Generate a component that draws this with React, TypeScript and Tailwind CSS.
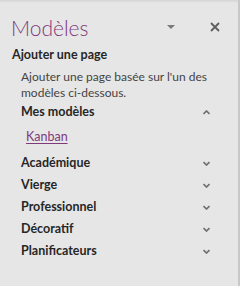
const categories = ["Académique", "Vierge", "Professionnel", "Décoratif", "Planificateurs"];

function Caret({ up }: { up?: boolean }) {
  return (
    <svg width="7" height="5" viewBox="0 0 7 5" className="text-[#707070]">
      {up ? (
        <path d="M0.5 4 L3.5 1 L6.5 4" fill="none" stroke="currentColor" strokeWidth="1.7" />
      ) : (
        <path d="M0.5 1 L3.5 4 L6.5 1" fill="none" stroke="currentColor" strokeWidth="1.7" />
      )}
    </svg>
  );
}

export default function App() {
  return (
    <div
      className="w-[240px] h-[286px] bg-[#e6e6e6] border-r-2 border-[#c8c8c8] relative overflow-hidden"
      style={{ fontFamily: "Lato, 'Noto Sans', sans-serif" }}
    >
      {/* léger dégradé en haut */}
      <div className="absolute top-0 left-0 right-0 h-[3px] bg-gradient-to-b from-[#d4d4d4] to-[#e6e6e6]" />

      {/* en-tête */}
      <div className="flex items-center pl-[11px] pr-[18px] pt-[14px] h-[40px]">
        <h1 className="text-[21px] font-light text-[#80397b] leading-none">Modèles</h1>
        <div className="ml-auto flex items-center gap-[35px]">
          <div className="w-0 h-0 border-l-[4px] border-r-[4px] border-t-[4px] border-l-transparent border-r-transparent border-t-[#7a7a7a]" />
          <svg width="10" height="10" viewBox="0 0 10 10">
            <path d="M1 1 L9 9 M9 1 L1 9" stroke="#5e5e5e" strokeWidth="1.8" />
          </svg>
        </div>
      </div>

      <div className="pl-[12px] pr-[4px] pt-[7px]">
        <div className="text-[12.5px] font-bold text-[#262626] leading-[16px]">Ajouter une page</div>
        <p className="mt-[6px] pl-[9px] text-[12px] text-[#444444] leading-[16px]">
          Ajouter une page basée sur l'un des modèles ci-dessous.
        </p>

        <div className="pl-[9px]">
          <div className="flex items-center justify-between pr-[24px] h-[22px]">
            <span className="text-[12.5px] font-bold text-[#262626]">Mes modèles</span>
            <Caret up />
          </div>
          <div className="pl-[5px] h-[27px]">
            <a href="#" className="text-[12.5px] text-[#80397b] underline underline-offset-2">Kanban</a>
          </div>
          <div className="mt-[2px]">
            {categories.map((c) => (
              <div key={c} className="flex items-center justify-between pr-[24px] h-[22px]">
                <span className="text-[12.5px] font-bold text-[#262626]">{c}</span>
                <Caret />
              </div>
            ))}
          </div>
        </div>
      </div>
    </div>
  );
}
